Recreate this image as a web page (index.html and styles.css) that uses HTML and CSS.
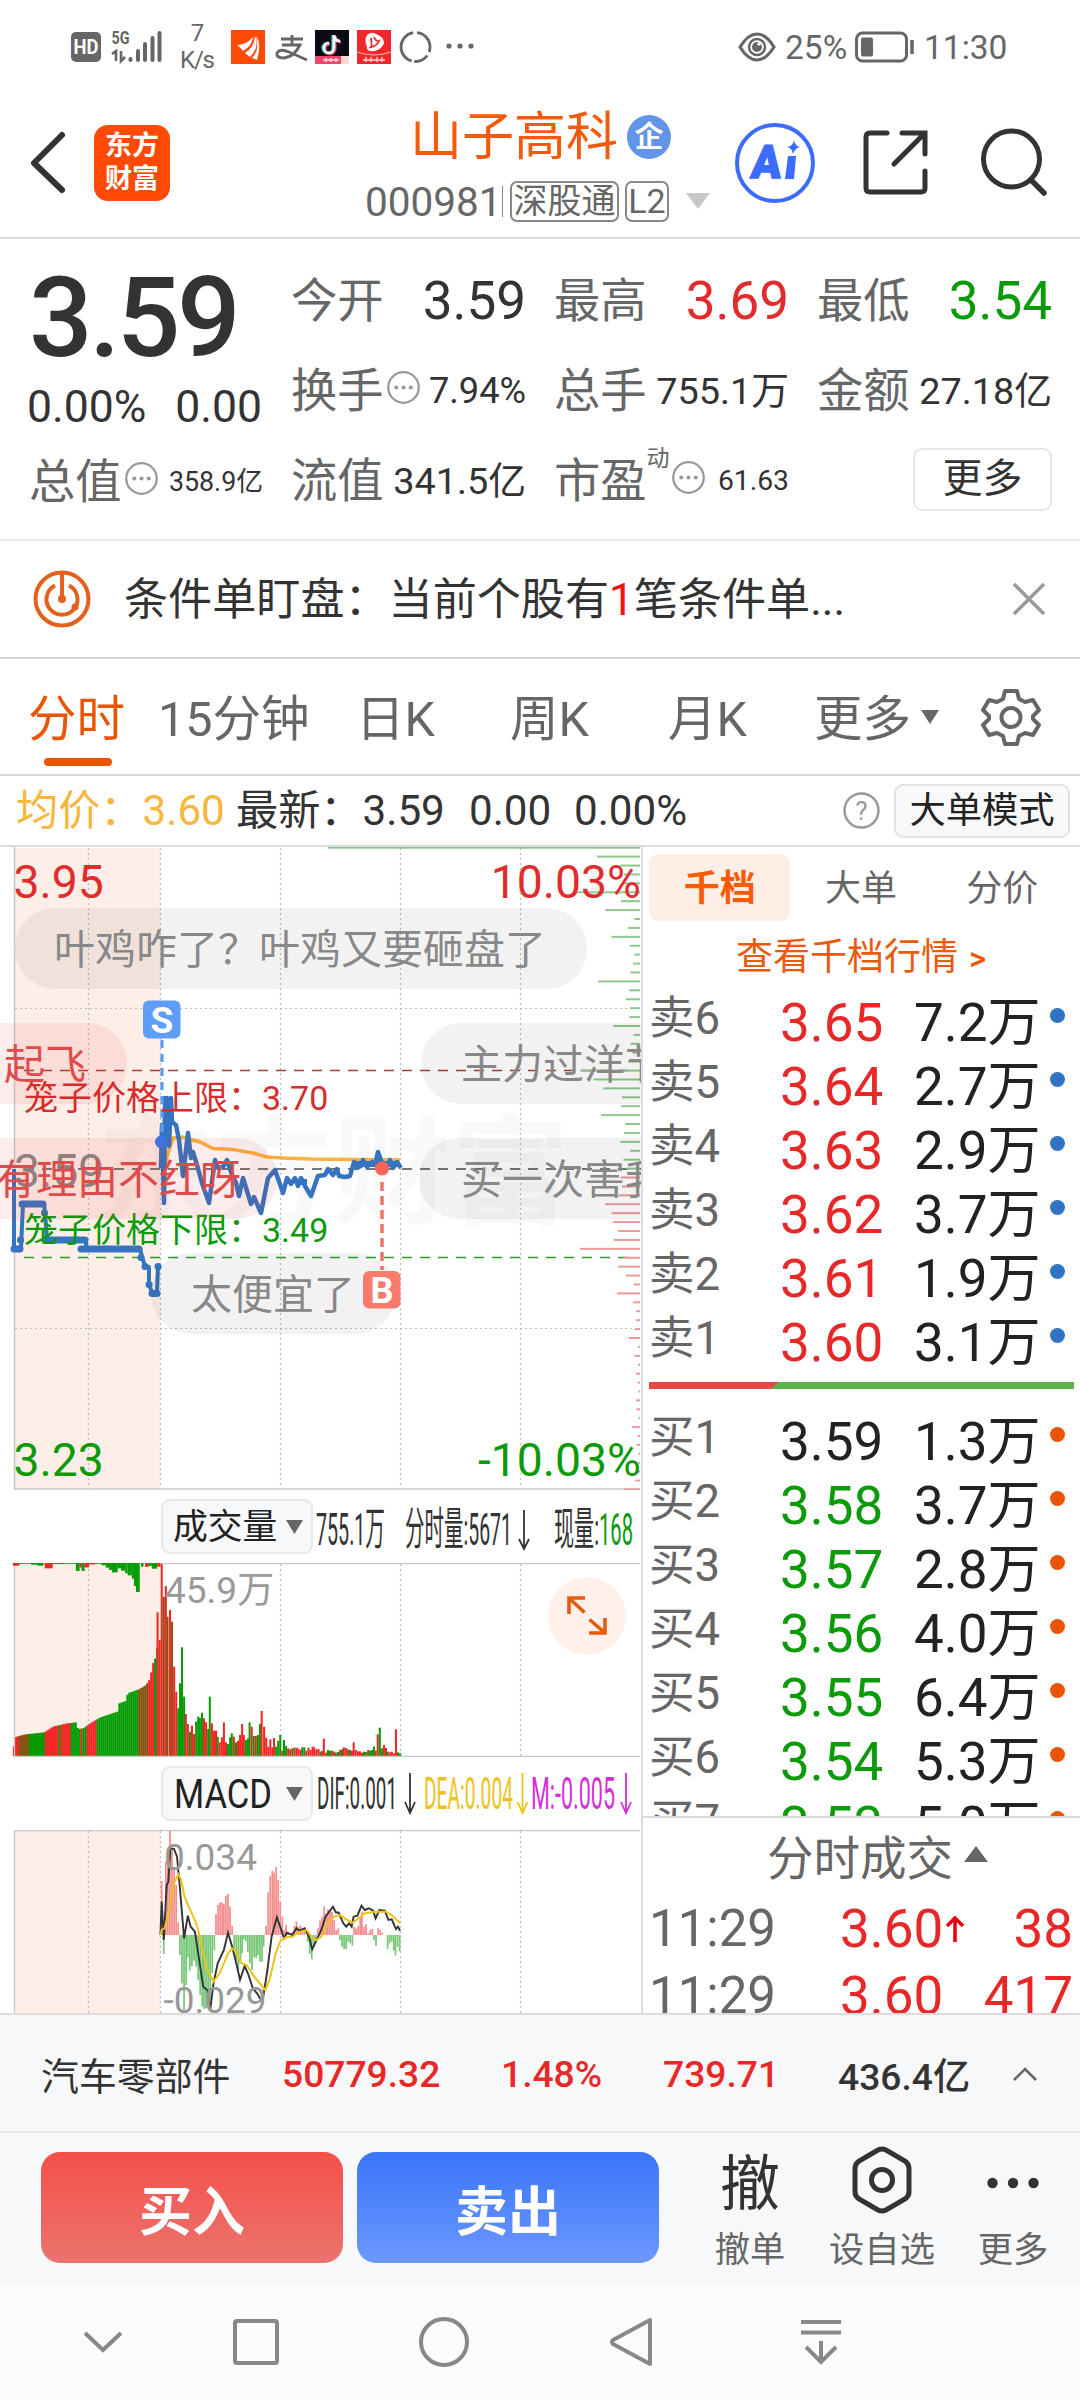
FILE: index.html
```html
<!DOCTYPE html>
<html lang="zh-CN">
<head>
<meta charset="utf-8">
<title>山子高科 000981</title>
<link rel="stylesheet" href="styles.css">
</head>
<body>
<div class="status">
  <svg class="st-left" width="480" height="94" viewBox="0 0 480 94">
    <rect x="71" y="32" width="30" height="30" rx="5" fill="#666"/>
    <text x="73.500" y="54" font-size="20" font-weight="700" fill="#fff" textLength="25" lengthAdjust="spacingAndGlyphs">HD</text>
    <text x="111.500" y="44" font-size="19" font-weight="700" fill="#666" textLength="18" lengthAdjust="spacingAndGlyphs">5G</text>
    <path d="M112 54l4-3v10M121 51v10l4-4" stroke="#666" stroke-width="2.600" fill="none"/>
    <path d="M130.500 59v1M138 51v9M145 44v16M152.500 38v22M159.500 33v27" stroke="#666" stroke-width="4" stroke-linecap="round"/>
    <text x="197.500" y="41" font-size="24" fill="#666" text-anchor="middle">7</text>
    <text x="197.500" y="67.500" font-size="24" fill="#666" text-anchor="middle" textLength="35">K/s</text>
    <rect x="231" y="30" width="34" height="34" fill="#fe4a05"/>
    <path d="M237 45q9 0 16-8-1 9-10 14-3-4-6-6zM245 53q9-5 10-17 5 11-5 21zM252 58q8-8 4-22 6 8 1 24z" fill="#fff"/>
    <path d="M281 39h22M292 35v9M282 45h18q-6 12-16 13-8 0-7-5 3-5 12-1l18 8" fill="none" stroke="#666" stroke-width="2.800"/>
    <rect x="315" y="30" width="34" height="34" fill="#0b0b16"/>
    <path d="M333 35v13a5 5 0 1 1-5-5" stroke="#25f4ee" stroke-width="3" fill="none"/>
    <path d="M335 36v13a5 5 0 1 1-5-5M335 36q1 6 6 6" stroke="#ff4060" stroke-width="3" fill="none"/>
    <path d="M334 35v13a5 5 0 1 1-5-5M334 35q1 6 6 6" stroke="#fff" stroke-width="2.600" fill="none"/>
    <path d="M315 56h34v8h-34z" fill="#f2456b"/><path d="M341 56h8v8h-8z" fill="#fbd9cf"/>
    <path d="M323 60h16M326 58v4M331 58v4M336 58v4" stroke="#ffd9e0" stroke-width="1.500"/>
    <rect x="357" y="30" width="34" height="34" fill="#f0272c"/>
    <path d="M367 35q5-4 9-1 8 3 8 9-1 5-9 8-9 1-8-4-3-7 0-12z" fill="#fff"/><path d="M371 38q1 8 0 9 6-1 8-6-3 1-5-4" stroke="#f0272c" stroke-width="1.800" fill="none"/>
    <path d="M357 52q17 6 34 0" stroke="#ffb8a8" fill="none"/><path d="M363 60h22M366 57v5M371 57v5M377 57v5M382 57v5" stroke="#ffd0c8" stroke-width="1.500"/>
    <circle cx="415.500" cy="47" r="14.500" fill="none" stroke="#666" stroke-width="2.800" stroke-dasharray="5 4 15 2.500 39 4 21.600"/>
    <circle cx="449" cy="46" r="2.600" fill="#666"/><circle cx="460" cy="46" r="2.600" fill="#666"/><circle cx="471" cy="46" r="2.600" fill="#666"/>
  </svg>
  <div class="st-right">
    <svg width="38" height="32" viewBox="0 0 38 32"><path d="M2 16Q10 3 19 3t17 13Q28 29 19 29T2 16z" fill="none" stroke="#666" stroke-width="3.200"/><circle cx="19" cy="16" r="8" fill="none" stroke="#666" stroke-width="2.500"/><circle cx="19" cy="16" r="5" fill="#666"/><circle cx="21" cy="13" r="1.800" fill="#fff"/></svg>
    <span class="pct">25%</span>
    <svg width="60" height="32" viewBox="0 0 60 32"><rect x="1.500" y="2" width="50" height="28" rx="6" fill="none" stroke="#666" stroke-width="3"/><rect x="6" y="6.500" width="12" height="19" rx="2" fill="#666"/><path d="M57 9v14" stroke="#666" stroke-width="3.500"/></svg>
    <span class="clock">11:30</span>
  </div>
</div>

<header class="head">
  <svg class="back" width="40" height="66" viewBox="0 0 40 66"><path d="M34 5L6 33l28 27" fill="none" stroke="#333" stroke-width="6" stroke-linecap="round" stroke-linejoin="round"/></svg>
  <div class="logo"><span>东方</span><span>财富</span></div>
  <div class="title">
    <div class="name"><span>山子高科</span><i class="qi">企</i></div>
    <div class="code"><span class="num">000981</span><i class="bar"></i><span class="tag">深股通</span><span class="tag l2">L2</span><svg width="24" height="16" viewBox="0 0 24 16"><path d="M0 0h24L12 16z" fill="#c8c8c8"/></svg></div>
  </div>
  <div class="tools">
    <svg width="80" height="80" viewBox="0 0 80 80"><circle cx="40" cy="40" r="38" fill="none" stroke="#3c6bff" stroke-width="4"/><text x="0" y="0" transform="translate(15 55) skewX(-6)" font-size="46" font-weight="900" fill="#3c6bff" stroke="#3c6bff" stroke-width="1.500" textLength="30" lengthAdjust="spacingAndGlyphs">A</text><path d="M53 33h8l-2 23h-9zM59 17q1 6 6 7-5 1-7 7-1-6-6-7 6-1 7-7z" fill="#3c6bff"/></svg>
    <svg width="68" height="68" viewBox="0 0 68 68"><path d="M25 5H8q-4 0-4 4v51q0 4 4 4h51q4 0 4-4V43M40 5h23v21M62 6L32 36" fill="none" stroke="#333" stroke-width="5" stroke-linecap="round"/></svg>
    <svg width="68" height="68" viewBox="0 0 68 68"><circle cx="31.500" cy="31" r="28" fill="none" stroke="#333" stroke-width="5"/><path d="M52 53l12 12" stroke="#333" stroke-width="5.500" stroke-linecap="round"/></svg>
  </div>
</header>

<section class="quote">
  <div class="c0">
    <div class="price">3.59</div>
    <div class="chg"><span>0.00%</span><span>0.00</span></div>
    <div class="cell r3"><b>总值</b><svg class="dots" viewBox="0 0 32 32"><use href="#more"/></svg><em class="s27">358.9亿</em></div>
  </div>
  <div class="col">
    <div class="cell"><b>今开</b><em class="s53">3.59</em></div>
    <div class="cell"><b>换手</b><svg class="dots" viewBox="0 0 32 32"><use href="#more"/></svg><em class="s36">7.94%</em></div>
    <div class="cell r3"><b>流值</b><em class="s38">341.5亿</em></div>
  </div>
  <div class="col">
    <div class="cell"><b>最高</b><em class="s53 red">3.69</em></div>
    <div class="cell"><b>总手</b><em class="s38">755.1万</em></div>
    <div class="cell r3"><b>市盈</b><sup>动</sup><svg class="dots" viewBox="0 0 32 32"><use href="#more"/></svg><em class="s28">61.63</em></div>
  </div>
  <div class="col">
    <div class="cell"><b>最低</b><em class="s53 green">3.54</em></div>
    <div class="cell"><b>金额</b><em class="s38">27.18亿</em></div>
    <div class="cell more"><span>更多</span></div>
  </div>
  <svg width="0" height="0" class="defs"><symbol id="more" viewBox="0 0 32 32"><circle cx="16" cy="16" r="14.800" fill="none" stroke="#999" stroke-width="2.200"/><circle cx="9" cy="16" r="2" fill="#999"/><circle cx="16" cy="16" r="2" fill="#999"/><circle cx="23" cy="16" r="2" fill="#999"/></symbol></svg>
</section>

<section class="notice">
  <svg width="58" height="58" viewBox="0 0 58 58" fill="none" stroke="#e3611c" stroke-width="4"><circle cx="29" cy="29" r="26.500"/><path d="M22 15.500a15.500 15.500 0 1 0 14 0M29 4v24"/><circle cx="29" cy="29" r="3" fill="#e3611c" stroke-width="2"/><circle cx="42" cy="37" r="3.500" fill="#e3611c" stroke="none"/></svg>
  <p>条件单盯盘：当前个股有<strong>1</strong>笔条件单...</p>
  <svg class="close" width="34" height="34" viewBox="0 0 34 34"><path d="M2 2l30 30M32 2L2 32" stroke="#999" stroke-width="3.500"/></svg>
</section>

<nav class="tabs">
  <span class="on">分时</span><span>15分钟</span><span>日K</span><span>周K</span><span>月K</span><span>更多</span>
  <svg class="tri" width="18" height="14" viewBox="0 0 18 14"><path d="M0 0h18L9 14z" fill="#666"/></svg>
  <svg class="gear" width="60" height="60" viewBox="0 0 60 60" fill="none" stroke="#666" stroke-width="4"><path d="M24 4h12l2 8 6 3 8-2 6 10-6 6v3l6 6-6 10-8-2-6 3-2 8H24l-2-8-6-3-8 2L2 38l6-6v-3l-6-6L8 13l8 2 6-3z" stroke-linejoin="round"/><circle cx="30" cy="30.500" r="9.500"/></svg>
</nav>

<section class="info">
  <span class="avg">均价：3.60</span><span class="last">最新：3.59</span><span class="d1">0.00</span><span class="d2">0.00%</span>
  <i class="q"><svg width="37" height="37" viewBox="0 0 37 37"><circle cx="18.500" cy="18.500" r="17" fill="none" stroke="#999" stroke-width="2.500"/><text x="18.500" y="27.500" font-size="26" text-anchor="middle" fill="#999">?</text></svg></i>
  <span class="mode">大单模式</span>
</section>

<main class="main">
  <div class="left">
    <svg id="price" class="block" width="641" height="643" viewBox="0 847 641 643">
      <rect x="15" y="848" width="145.500" height="641" fill="#fdeee7"/>
      <text class="wm" x="97" y="1215" font-size="118" textLength="472">东方财富</text>
      <path class="grid" d="M88.500 848v641M160.500 848v641M280.500 848v641M400.500 848v641M520.500 848v641M15 1008.500h625M15 1328.500h625"/>
      <path d="M14.500 847v642H640" fill="none" stroke="#c8c8c8" stroke-width="1.500"/>
      <path d="M24 1070.500h604" stroke="#b03a35" stroke-width="1.500" stroke-dasharray="10 8"/>
      <path d="M24 1257.500h604" stroke="#2f9a2f" stroke-width="1.500" stroke-dasharray="10 8"/>
      <path d="M24 1169h617" stroke="#777" stroke-width="2" stroke-dasharray="10 8"/>
      <g id="ladder"></g>
      <g font-size="46.300">
        <text x="13.500" y="898" fill="#e22b2b">3.95</text><text x="641" y="898" fill="#e22b2b" text-anchor="end">10.03%</text>
        <text x="14" y="1187" fill="#888">3.59</text>
        <text x="13.500" y="1476" fill="#0a9a0a">3.23</text><text x="641" y="1476" fill="#0a9a0a" text-anchor="end">-10.03%</text>
      </g>
      <polyline fill="none" stroke="#f8b141" stroke-width="3.600" points="165,1165 168,1153 173,1138 182,1137 200,1142 213,1148.500 233,1149.500 253,1153 267,1157 283,1158 310,1159 400,1160"/>
      <g fill="none" stroke="#3474c0" stroke-linejoin="round">
        <path stroke-width="4" d="M14 1169v80l7-1 2-44h21l1 9 2 26h39v9h54l2 9 3 9 4 1v17l3 9 5 0 1-27"/>
        <path stroke-width="7" stroke-linecap="round" d="M14 1249h6M22 1204h21M47 1240h38M81 1249h58M44.500 1213h.1M20.500 1240h.1M141 1257.500h.1M145 1266.500h.1M149 1284.500h.1M152 1293.500h5M158 1266.500h.1"/>
        <polyline stroke-width="4.500" points="161,1168 162,1125 164,1203 165,1098 166,1140 167,1098 169,1146 171,1098 172,1122 176,1125 179,1140 183,1176 188,1133 191,1158 193,1152 197,1165 202,1183 209,1203 215,1160 218,1168 223,1167 227,1160 231,1172 236,1183 239,1196 243,1178 251,1204 254,1197 261,1213 268,1178 275,1170 283,1193 287,1178 291,1184 295,1178 298,1186 301,1178 305,1186 311,1196 318,1176 325,1175 328,1169 333,1175 337,1169 339,1176 345,1177 350,1176 354,1162 357,1168 362,1165 363,1160 367,1167 372,1162 375,1165 378,1152 382,1163 387,1167 390,1160 393,1168 397,1162 401,1168"/>
        <path d="M297 1182h10M356 1164h43" stroke-width="6"/>
      </g>
      <path d="M162 1040v100" stroke="#5e9cf0" stroke-width="3.200" stroke-dasharray="8 6"/><circle cx="161.500" cy="1142" r="6.500" fill="#3478ee"/>
      <path d="M382 1182v88" stroke="#ef7468" stroke-width="3.500" stroke-dasharray="9 5"/><circle cx="382" cy="1168.500" r="7" fill="#fb6556"/>
      <g font-size="34"><text x="24" y="1109.500" fill="#d62c2c">笼子价格上限：3.70</text><text x="24" y="1242" fill="#0a9a0a">笼子价格下限：3.49</text></g>
      <g fill="#000" fill-opacity=".05"><rect x="15" y="908" width="572" height="81" rx="40"/><rect x="421" y="1023" width="400" height="81" rx="40"/><rect x="419" y="1138" width="400" height="81" rx="40"/><rect x="151" y="1253" width="245" height="81" rx="40"/></g>
      <g fill="#e93030" fill-opacity=".09"><rect x="-80" y="1023" width="207" height="81" rx="40"/><rect x="-80" y="1138" width="357" height="81" rx="40"/></g>
      <g font-size="41" fill="#888"><text x="54" y="964">叶鸡咋了？叶鸡又要砸盘了</text><text x="461" y="1079">主力过洋节</text><text x="461" y="1194">买一次害我</text><text x="191" y="1309">太便宜了</text></g>
      <g font-size="41" fill="#e04a4a"><text x="4" y="1079">起飞</text><text x="-5" y="1194">有理由不红呀</text></g>
      <rect x="143" y="1000.500" width="37.500" height="38" rx="6" fill="#5c9ef9"/><text x="161.800" y="1033" font-size="37" font-weight="700" fill="#fff" text-anchor="middle">S</text>
      <rect x="363" y="1271" width="37.500" height="37.500" rx="6" fill="#f87b6d"/><text x="382" y="1302.500" font-size="36" font-weight="700" fill="#fff" text-anchor="middle">B</text>
    </svg>

    <div class="ind">
      <span class="chip">成交量<svg width="17" height="14" viewBox="0 0 17 14"><path d="M0 0h17L8.500 14z" fill="#666"/></svg></span>
      <svg width="328" height="73" viewBox="313 1490 328 73" font-size="45" fill="#333">
        <text x="316" y="1545" textLength="69" lengthAdjust="spacingAndGlyphs">755.1万</text>
        <text x="405" y="1545" textLength="107" lengthAdjust="spacingAndGlyphs">分时量:5671</text>
        <path d="M524 1510v39M519 1539l5 10 5-10" fill="none" stroke="#333" stroke-width="1.800"/>
        <text x="554" y="1545" textLength="45" lengthAdjust="spacingAndGlyphs">现量:</text>
        <text x="599" y="1545" fill="#0a9a0a" textLength="34" lengthAdjust="spacingAndGlyphs">168</text>
      </svg>
    </div>

    <svg id="vol" class="block" width="641" height="194" viewBox="0 1563 641 194">
      <rect x="15" y="1564" width="145.500" height="192" fill="#fdeee7"/>
      <path class="grid" d="M88.500 1564v192M280.500 1564v192M400.500 1564v192M520.500 1564v192"/>
      <g id="vbars"></g>
      <path d="M640 1563.700H14.500V1756.300H640" fill="none" stroke="#c8c8c8" stroke-width="1.300"/>
      <g id="vtop"></g>
      <text x="165" y="1603" font-size="37" fill="#999">45.9万</text>
      <circle cx="587" cy="1616" r="39" fill="#fff1ea"/>
      <path d="M585 1598h-16v16M569.500 1598.500l15 14M589 1633h16v-15M604.500 1632.500l-15-13" fill="none" stroke="#e65a12" stroke-width="3.600"/>
    </svg>

    <div class="ind">
      <span class="chip"><svg width="100" height="40" viewBox="0 0 100 40"><text x="1" y="33.500" font-size="40" fill="#222" textLength="98" lengthAdjust="spacingAndGlyphs">MACD</text></svg><svg width="17" height="14" viewBox="0 0 17 14"><path d="M0 0h17L8.500 14z" fill="#666"/></svg></span>
      <svg width="328" height="73" viewBox="313 1757 328 73" font-size="45" fill="none" stroke-width="1.800">
        <text x="317" y="1809" fill="#333" textLength="80" lengthAdjust="spacingAndGlyphs">DIF:0.001</text><path d="M410 1773v40M405 1802l5 11 5-11" stroke="#333"/>
        <text x="424" y="1809" fill="#eec319" textLength="89" lengthAdjust="spacingAndGlyphs">DEA:0.004</text><path d="M522.500 1773v40M517.500 1802l5 11 5-11" stroke="#eec319"/>
        <text x="531" y="1809" fill="#d32fd8" textLength="84" lengthAdjust="spacingAndGlyphs">M:-0.005</text><path d="M626 1773v40M621 1802l5 11 5-11" stroke="#d32fd8"/>
      </svg>
    </div>

    <svg id="macd" class="block" width="641" height="183" viewBox="0 1830 641 183">
      <rect x="15" y="1831" width="145.500" height="182" fill="#fdeee7"/>
      <path class="grid" d="M88.500 1831v182M160.500 1831v182M280.500 1831v182M400.500 1831v182M520.500 1831v182"/>
      <path d="M640 1830.600H14.500V2013" fill="none" stroke="#c8c8c8" stroke-width="1.300"/>
      <g id="mbars"></g>
      <polyline id="dif" fill="none" stroke="#333" stroke-width="1.900"/><polyline id="dea" fill="none" stroke="#eec319" stroke-width="2"/>
      <g font-size="37" fill="#999"><text x="164" y="1869.500">0.034</text><text x="163.500" y="2012.500">-0.029</text></g>
    </svg>
  </div>

  <div class="right">
    <div class="modes"><span class="on">千档</span><span>大单</span><span>分价</span></div>
    <div class="link">查看千档行情<i>&gt;</i></div>
    <div class="book">
      <div class="row sell"><b>卖6</b><em>3.65</em><span>7.2万</span><i></i></div>
      <div class="row sell"><b>卖5</b><em>3.64</em><span>2.7万</span><i></i></div>
      <div class="row sell"><b>卖4</b><em>3.63</em><span>2.9万</span><i></i></div>
      <div class="row sell"><b>卖3</b><em>3.62</em><span>3.7万</span><i></i></div>
      <div class="row sell"><b>卖2</b><em>3.61</em><span>1.9万</span><i></i></div>
      <div class="row sell"><b>卖1</b><em>3.60</em><span>3.1万</span><i></i></div>
      <div class="ratio"><i></i></div>
      <div class="row buy flat"><b>买1</b><em>3.59</em><span>1.3万</span><i></i></div>
      <div class="row buy"><b>买2</b><em>3.58</em><span>3.7万</span><i></i></div>
      <div class="row buy"><b>买3</b><em>3.57</em><span>2.8万</span><i></i></div>
      <div class="row buy"><b>买4</b><em>3.56</em><span>4.0万</span><i></i></div>
      <div class="row buy"><b>买5</b><em>3.55</em><span>6.4万</span><i></i></div>
      <div class="row buy"><b>买6</b><em>3.54</em><span>5.3万</span><i></i></div>
      <div class="row buy"><b>买7</b><em>3.53</em><span>5.0万</span><i></i></div>
    </div>
    <div class="deals">
      <div class="dh">分时成交<svg width="24" height="16" viewBox="0 0 24 16"><path d="M0 16h24L12 0z" fill="#666"/></svg></div>
      <div class="deal"><b>11:29</b><em>3.60</em><svg width="20" height="28" viewBox="0 0 20 28"><path d="M10 27V3M2 11l8-8 8 8" fill="none" stroke="#e60012" stroke-width="3.500"/></svg><span>38</span></div>
      <div class="deal"><b>11:29</b><em>3.60</em><span>417</span></div>
    </div>
  </div>
</main>

<section class="index">
  <span class="sector">汽车零部件</span><span class="v v1">50779.32</span><span class="v v2">1.48%</span><span class="v v3">739.71</span><span class="v v4">436.4亿</span>
  <svg width="24" height="14" viewBox="0 0 24 14"><path d="M1 13L12 2l11 11" fill="none" stroke="#666" stroke-width="2.600"/></svg>
</section>

<section class="actions">
  <button class="btn b-buy">买入</button><button class="btn b-sell">卖出</button>
  <div class="act a1"><strong>撤</strong><span>撤单</span></div>
  <div class="act a2"><svg width="62" height="68" viewBox="0 0 62 68" fill="none" stroke="#333" stroke-width="5"><path d="M27 4q4-2 8 0l19 11q4 3 4 7v24q0 4-4 7L35 64q-4 2-8 0L8 53q-4-3-4-7V22q0-4 4-7z"/><circle cx="31" cy="34" r="10.500"/></svg><span>设自选</span></div>
  <div class="act a3"><svg width="54" height="68" viewBox="0 0 54 68"><g fill="#333"><circle cx="6.500" cy="37" r="5.200"/><circle cx="27" cy="37" r="5.200"/><circle cx="47.500" cy="37" r="5.200"/></g></svg><span>更多</span></div>
</section>

<footer class="nav">
  <svg width="40" height="24" viewBox="0 0 40 24"><path d="M2 3l18 17L38 3"/></svg>
  <svg width="48" height="48" viewBox="0 0 48 48"><rect x="3" y="3" width="42" height="42" rx="2"/></svg>
  <svg width="52" height="52" viewBox="0 0 52 52"><circle cx="26" cy="26" r="23"/></svg>
  <svg width="46" height="52" viewBox="0 0 46 52"><path d="M42 4v44L5 28q-2-2 0-4z" stroke-linejoin="round"/></svg>
  <svg width="42" height="48" viewBox="0 0 42 48"><path d="M1 4h40M1 14.500h40M21 23v21M6 29l15 15 15-15"/></svg>
</footer>
<script src="chart.js"></script>
</body>
</html>
```
FILE: styles.css
```css
* { box-sizing: border-box; }
html, body { margin: 0; padding: 0; }
body { width: 1080px; height: 2400px; overflow: hidden; background: #fff; color: #333; font-family: Roboto, "Noto Sans CJK SC", sans-serif; }
svg { display: block; flex: none; }
i, em { font-style: normal; }
b { font-weight: 400; }
span, b, em { white-space: nowrap; }
.red { color: #e22b2b; }
.green { color: #0a9a0a; }

.status { height: 94px; display: flex; }
.st-right { display: flex; align-items: center; height: 94px; padding-left: 258px; color: #666; font-size: 33.500px; line-height: 40px; }
.pct { margin: 1px 7px 0 9px; width: 63px; }
.clock { margin: 1px 0 0 9px; }

.head { height: 145px; border-bottom: 2px solid #dadada; display: flex; }
.back { margin: 36px 0 0 28px; }
.logo { width: 76px; height: 76px; margin: 31px 0 0 26px; border-radius: 14px; background: #fe4a05; color: #fff; font-size: 27px; font-weight: 700; line-height: 33px; padding-top: 5px; text-align: center; display: flex; flex-direction: column; }
.title { width: 370px; margin-left: 195px; padding-top: 12px; }
.name { display: flex; align-items: center; height: 64px; padding-left: 45px; font-size: 52px; line-height: 64px; color: #f4590c; }
.qi { width: 44px; height: 44px; margin: -3px 0 0 9px; border-radius: 50%; background: #6294e8; color: #fff; font-size: 29px; font-weight: 700; line-height: 44px; text-align: center; }
.code { display: flex; align-items: center; height: 44px; margin-top: 9px; color: #666; }
.num { font-size: 40.500px; line-height: 44px; width: 137px; margin-top: 1px; }
.bar { width: 1px; height: 31px; background: #888; margin-right: 7px; }
.tag { height: 41px; width: 109px; border: 2px solid #888; border-radius: 7px; font-size: 34px; line-height: 37px; text-align: center; }
.l2 { width: 44px; margin: 0 17px 0 6px; }
.tools { display: flex; align-items: flex-start; padding-top: 29px; }
.tools svg + svg { margin: 5px 0 0 47px; }
.tools svg:first-child { margin: 0; }
.tools svg:nth-child(3) { margin-left: 50px; }

.quote { height: 302px; border-bottom: 2px solid #ececec; display: flex; }
.c0 { width: 262px; margin-left: 29px; }
.price { height: 132px; padding-top: 13px; font-size: 112px; font-weight: 500; line-height: 132px; letter-spacing: -3.500px; color: #333; }
.chg { display: flex; justify-content: space-between; width: 235px; height: 66px; margin: 3px 0 0 -2px; font-size: 44.500px; line-height: 66px; }
.c0 .cell { margin-top: 12px; }
.col { width: 235px; margin-right: 28px; padding-top: 17px; }
.cell { display: flex; align-items: center; height: 90px; }
.c0 .cell { width: 234px; height: 60px; }
.cell b { font-size: 46.300px; line-height: 60px; color: #666; }
.cell em { margin-left: auto; line-height: 60px; }
.dots { width: 33px; height: 33px; margin: -8px 0 0 3px; }
.s53 { font-size: 53px; } .s36 { font-size: 36.200px; } .s38 { font-size: 37.800px; } .s28 { font-size: 28.300px; } .s27 { font-size: 26.800px; }
.cell sup { font-size: 23px; line-height: 24px; margin: -45px 0 0 0; color: #666; }
.cell sup + .dots { margin-left: 2px; }
.more { justify-content: flex-end; }
.more span { width: 139px; height: 63px; margin-top: -3px; border: 2px solid #e4e6e8; border-radius: 9px; font-size: 40px; line-height: 58px; text-align: center; }
.defs { width: 0; height: 0; }

.notice { height: 118px; border-bottom: 2px solid #d8d8d8; display: flex; align-items: center; padding-left: 33px; }
.notice p { margin: 2px 0 0 33px; width: 888px; font-size: 44.100px; line-height: 60px; white-space: nowrap; }
.notice strong { color: #f01414; font-weight: 400; }

.tabs { height: 117px; border-bottom: 2px solid #d8d8d8; display: grid; grid-template-columns: 130px 198px 154px 158px 146px 107px 40px 1fr; padding-left: 28px; font-size: 48.500px; color: #666; align-items: center; }
.tabs span { line-height: 117px; height: 115px; padding-top: 2px; }
.tabs .on { color: #ea5504; position: relative; }
.tabs .on::after { content: ""; position: absolute; left: 16px; top: 99px; width: 68px; height: 8px; border-radius: 4px; background: #ea5504; }
.tabs .gear { margin-left: 20px; }

.info { height: 71px; border-bottom: 2px solid #dcdcdc; display: flex; align-items: center; padding-left: 16px; font-size: 42.200px; line-height: 60px; }
.info > * { flex: none; }
.avg { width: 220px; color: #f6b73c; }
.last { width: 233px; }
.d1 { width: 105px; } .d2 { width: 269px; }
.q { width: 51px; }
.mode { width: 176px; height: 54px; border: 2px solid #e0e2e6; border-radius: 9px; background: #f7f8fa; color: #222; font-size: 36.300px; line-height: 50px; text-align: center; }

.main { height: 1166px; display: flex; }
.left { width: 641px; }
.grid { fill: none; stroke: #bdbdbd; stroke-width: 1.200; stroke-dasharray: 2 3; }
.wm { fill: #000; fill-opacity: .025; font-weight: 700; }
.block { overflow: hidden; }
.ind { height: 73px; display: flex; align-items: center; padding-left: 161px; }
.chip { width: 152px; height: 55px; flex: none; border: 2px solid #e7e9ec; border-radius: 9px; background: #f7f8fa; display: flex; align-items: center; justify-content: space-between; padding: 0 8px 0 10px; color: #222; font-size: 34.800px; line-height: 50px; }
.right { width: 439px; border-left: 2px solid #dcdcdc; }
.modes { display: flex; padding: 7px 0 0 6px; }
.modes span { width: 141.300px; height: 67px; border-radius: 9px; text-align: center; font-size: 36px; line-height: 71px; color: #666; }
.modes .on { background: #ffeee6; color: #fb5a05; font-weight: 700; }
.link { height: 66px; padding: 4px 0 0 93px; font-size: 37px; line-height: 66px; color: #ea5a0d; }
.link i { margin-left: 11px; font-size: 33px; font-weight: 500; }
.book { height: 831px; overflow: hidden; border-bottom: 2px solid #dcdcdc; }
.row { height: 64px; display: grid; grid-template-columns: 131px 134px 136px 1fr; padding-left: 6px; }
.row b { font-size: 45.500px; line-height: 64px; color: #666; }
.row em, .row span { font-size: 53px; line-height: 73px; color: #222; height: 64px; }
.sell em { color: #e82727; } .buy em { color: #0a9a0a; } .row.flat em { color: #222; }
.row i { width: 15px; height: 15px; border-radius: 50%; margin-top: 21px; background: #2f74c0; }
.buy i { background: #ea5504; }
.ratio { height: 35px; padding: 11px 6px 0; }
.ratio i { display: block; height: 7px; background: linear-gradient(135deg, #e84747 0 91px, #5cb447 91.500px); }
.deals { height: 195px; overflow: hidden; }
.dh { display: flex; align-items: center; height: 76px; padding: 0 0 4px 124px; font-size: 46.500px; color: #666; gap: 11px; }
.deal { display: flex; align-items: center; height: 67px; padding: 3px 7px 0 6px; font-size: 53px; line-height: 64px; color: #e82727; }
.deal b { width: 191px; color: #666; font-size: 51px; }
.deal span { margin-left: auto; }
.deal svg { margin-left: 2px; }

.index { height: 118px; border-top: 2px solid #dcdcdc; background: #f7f8fa; display: flex; align-items: center; padding-left: 41px; font-size: 37.900px; padding-top: 2px; }
.index > * { flex: none; }
.sector { width: 241px; margin-top: -2px; }
.v { font-weight: 500; color: #e82727; font-size: 37.200px; }
.v1 { width: 219px; } .v2 { width: 162px; } .v3 { width: 175px; } .v4 { width: 175px; color: #333; }
.actions { height: 153px; border-top: 2px solid #e6e7e9; background: #f7f8fa; display: flex; padding: 19px 0 0 41px; }
.btn { flex: none; width: 302px; height: 111px; margin: 0 14px 0 0; padding: 0; border: 0; border-radius: 19px; color: #fff; font: 700 53px Roboto, "Noto Sans CJK SC", sans-serif; }
.b-buy { background: linear-gradient(#f5504b, #ec736d); }
.b-sell { background: linear-gradient(#3a75f9, #6c98ff); }
.act { display: flex; flex-direction: column; align-items: center; color: #666; font-size: 35.300px; line-height: 50px; flex: none; }
.act strong { height: 73px; font-size: 60px; line-height: 66px; font-weight: 400; color: #333; }
.act svg { margin-top: -6px; margin-bottom: 11px; }
.a1 { width: 110px; margin-left: 22px; }
.a2 { width: 140px; margin-left: 7px; }
.a3 { width: 110px; margin-left: 6px; }

.nav { height: 116px; background: #fcfcfc; display: grid; grid-template-columns: 149px 186px 190px 192px 1fr; padding-left: 83px; align-items: center; }
.nav svg { fill: none; stroke: #888; stroke-width: 4; }
```
FILE: chart.js
```js
const NS = 'http://www.w3.org/2000/svg';
const SX = 2.412;
const RED = '#f22626', GREEN = '#059c05', MIX = '#84560f';

function rect(parent, x, y, w, h, fill) {
  const r = document.createElementNS(NS, 'rect');
  Object.entries({ x, y, width: w, height: h, fill }).forEach(([k, v]) => r.setAttribute(k, v));
  document.getElementById(parent).appendChild(r);
}

// Price distribution along the right edge: one bar per price step
const ladder = [791,1440,1495,1505,1505,1390,1498,1460,1530,1515,1475,1519,1530,1527,1521,1443,1518,1510,1520,1518,1479,1528,1521,1525,1515,1400,1432,1455,1500,1498,1450,1508,1505,1496,1520,1504,1510,1497,1500,1492,1460,1475,1479,1491,1480,1399,1504,1491,1510,1529,1488,1527,1534,1534,1531,1517,1539,1530,1539,1534,1538,1540,1534,1535,1540,1525,1538,1536,1540,1540,1538,1532,1505];
ladder.forEach((v, i) => rect('ladder', v / SX, 846.7 + i * 8.914, 640 - v / SX, 2, i < 37 ? '#8fc88f' : '#eb9a9a'));

// Call auction volume
const pre = [[30,775],[36,740],[60,733],[105,727],[125,710],[160,700],[183,697],[185,718],[200,714],[215,700],[240,682],[283,664],[285,640],[303,632],[305,610],[333,598],[350,585],[360,565],[365,525],[372,505],[377,470]];
const zones = [[44,RED],[68,MIX],[104,GREEN],[138,RED],[146,GREEN],[166,RED],[192,GREEN],[197,RED],[204,GREEN],[231,RED],[333,GREEN],[355,MIX],[368,RED],[378,GREEN]];
for (let x = 31; x < 377; x += 4.8) {
  let k = pre.findIndex(p => p[0] > x);
  if (k < 1) k = pre.length - 1;
  const [a, b] = [pre[k - 1], pre[k]];
  const y = a[1] + (b[1] - a[1]) * Math.min(1, (x - a[0]) / (b[0] - a[0]));
  rect('vbars', x / SX, 1490 + y / 3, 2.3, (798 - y) / 3, zones.find(z => x < z[0])[1]);
}

// Continuous trading volume
const vol = '380,367r 385,450r 390,222r 395,320m 400,288r 404,380m 410,360r 415,395m 420,530r 425,605r 430,655g 434,580g 439,472g 444,620g 448,672r 453,702r 458,725g 463,707r 468,732r 473,695g 478,680g 482,684g 487,668g 492,685r 497,697r 502,717g 506,620g 511,700r 516,722r 521,722r 525,740g 530,757r 535,742r 540,697r 545,757r 550,762g 555,742g 559,730g 564,740r 569,757g 574,752r 579,735r 584,702r 588,735r 593,750g 598,745g 602,697g 607,710r 612,738g 617,738r 622,735g 627,702g 631,663r 637,710r 642,743r 647,770r 652,748r 657,772r 661,744r 666,770g 671,752g 676,735g 681,782r 685,750g 690,768g 695,775r 700,778r 705,775g 710,773r 715,773r 720,776r 725,780r 729,772g 734,772g 739,782r 744,773r 749,780r 754,770r 758,772r 763,778r 768,777r 773,785g 777,783r 781,746r 786,788r 791,780g 796,782g 801,782r 806,785r 810,788g 815,786g 820,780r 825,778g 829,772r 834,774r 839,778r 844,780g 849,782r 853,757r 858,780r 863,784r 868,784r 873,788r 878,785g 883,786g 888,780r 892,782g 897,780g 902,770g 906,782r 911,733r 916,713g 921,775g 926,765r 931,774r 935,785g 940,787r 945,785r 950,790r 955,718r 960,787g 965,790g';
vol.split(' ').forEach(s => {
  const [x, t] = s.split(','), y = parseInt(t);
  rect('vbars', (x - 2.4) / SX, 1490 + y / 3, 2.05, (798 - y) / 3, { r: RED, g: GREEN, m: MIX }[t.slice(-1)]);
});

// Unmatched auction volume hanging from the top edge
[[31,47,227,RED],[47,75,221,RED],[75,90,224,GREEN],[90,105,227,GREEN],[108,127,235,RED],[127,155,222,RED],[155,183,221,GREEN],[183,192,243,GREEN],[192,197,233,RED],[197,204,243,GREEN],[204,215,232,RED],[215,230,223,RED],[230,245,221,GREEN],[245,255,226,GREEN],[255,263,233,GREEN],[263,270,240,GREEN],[270,284,247,GREEN],[284,292,235,GREEN],[292,302,242,GREEN],[302,308,250,GREEN],[308,318,256,GREEN],[318,323,266,GREEN],[323,328,288,GREEN],[328,337,306,GREEN],[340,346,230,GREEN],[350,358,231,RED],[358,366,228,GREEN],[366,379,236,GREEN],[379,387,230,RED]]
  .forEach(([a, b, y, c]) => rect('vtop', a / SX, 1563, (b - a) / SX, (y - 219) / 3, c));

// MACD histogram around the zero axis
const macd = '390,393 395,612 400,335 405,300 410,243 415,300 420,355 425,405 430,517 434,615 439,700 444,780 449,705 453,622 458,662 463,648 468,632 473,650 478,690 483,735 488,770 492,776 497,775 502,760 507,780 512,670 517,600 521,492 526,465 531,457 536,457 540,462 545,437 550,432 555,470 560,528 565,600 570,630 575,660 580,640 584,610 588,568 593,573 598,605 603,640 608,660 613,622 618,625 622,615 627,635 632,635 636,590 642,528 647,427 652,378 657,363 661,368 666,351 671,390 676,455 681,500 686,540 690,525 695,545 700,550 705,545 710,528 715,514 720,530 725,527 730,545 735,540 742,575 747,612 752,628 757,590 762,575 767,535 772,512 777,500 782,470 787,490 791,478 796,480 801,485 806,510 811,540 816,535 820,570 825,590 830,597 835,597 840,575 845,580 850,587 854,530 859,535 864,527 869,500 873,485 878,530 883,522 888,550 893,540 898,537 902,570 907,588 912,535 917,540 922,548 935,597 940,580 945,575 950,602 954,616 959,590 964,603';
macd.split(' ').forEach(s => {
  const [x, y] = s.split(',').map(Number);
  const up = y < 555;
  rect('mbars', (x - 2.2) / SX, 1750 + Math.min(y, 555) / 3, 1.75, Math.abs(y - 555) / 3, up ? '#f48e8e' : '#77c877');
});

const line = (id, s) => document.getElementById(id).setAttribute('points',
  s.split(' ').map(p => { const [x, y] = p.split(',').map(Number); return (x / SX).toFixed(1) + ',' + (1750 + y / 3).toFixed(1); }).join(' '));
line('dif', '387,555 390,455 395,570 402,405 406,395 411,295 420,297 427,320 433,400 444,565 453,497 460,530 470,545 478,610 490,710 500,720 507,780 515,700 525,640 540,600 550,548 560,590 570,640 579,690 590,648 598,670 610,715 620,730 633,757 645,660 655,560 668,502 677,535 685,565 692,548 705,555 715,535 722,542 735,535 745,560 753,598 763,572 775,540 785,500 803,470 810,487 817,488 828,520 835,530 842,520 848,530 853,500 862,497 872,467 880,480 890,475 900,482 906,505 915,480 928,482 937,510 945,508 955,537 960,530 965,542');
line('dea', '387,555 390,540 397,535 410,470 420,400 430,373 437,390 445,440 455,470 470,510 478,540 490,610 500,660 515,695 530,670 550,610 560,595 570,605 582,640 595,645 610,675 640,720 650,690 665,610 677,570 690,562 705,560 720,547 740,540 752,562 763,570 775,560 790,520 805,500 820,495 835,508 850,518 865,505 880,490 905,485 930,485 945,495 965,520');
```
